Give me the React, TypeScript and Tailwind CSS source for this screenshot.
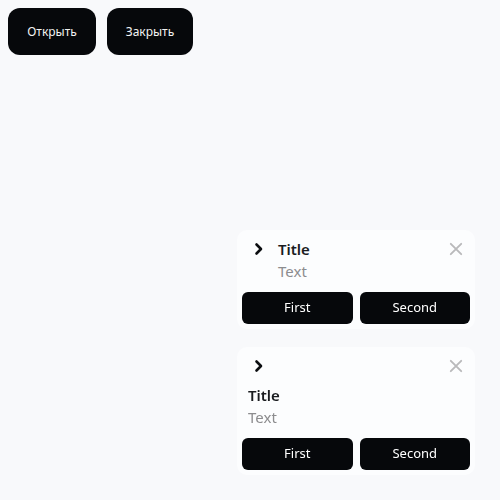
import type { ReactNode } from "react";

// toast-like notification cards, stacked in the bottom right corner

function Chevron() {
  return (
    <svg width="24" height="24" viewBox="0 0 24 24" fill="none" className="text-[#0b0d10]">
      <path d="M9.5 7.5 14 12l-4.5 4.5" stroke="currentColor" strokeWidth="2.6" strokeLinecap="round" strokeLinejoin="round" />
    </svg>
  );
}

function Close() {
  return (
    <svg width="24" height="24" viewBox="0 0 24 24" fill="none" className="text-[#b9b9bb]">
      <path d="M6.8 6.8l10.4 10.4M17.2 6.8 6.8 17.2" stroke="currentColor" strokeWidth="1.9" strokeLinecap="round" />
    </svg>
  );
}

function Actions() {
  return (
    <div className="grid grid-cols-2 gap-[7px]">
      <button className="h-8 rounded-[6px] bg-[#06080b] text-[13px] text-white">First</button>
      <button className="h-8 rounded-[6px] bg-[#06080b] text-[13px] text-white">Second</button>
    </div>
  );
}

function Card({ children }: { children: ReactNode }) {
  return (
    <div className="w-[238px] rounded-[10px] bg-[#fcfdfe] p-[5px]">{children}</div>
  );
}

export default function App() {
  return (
    <div className="relative min-h-screen bg-[#f8f9fb] font-['Noto_Sans',sans-serif]">
      <div className="flex gap-[11px] p-2">
        <button className="h-[47px] w-[88px] rounded-[12px] bg-[#06080b] text-[12px] text-[#f2f2f2]">
          Открыть
        </button>
        <button className="h-[47px] w-[86px] rounded-[12px] bg-[#06080b] text-[12px] text-[#f2f2f2]">
          Закрыть
        </button>
      </div>

      <div className="fixed bottom-[25px] right-[25px] flex flex-col gap-[18px]">
        <Card>
          <div className="flex items-start pl-[5px] pr-[2px] pt-[2px]">
            <Chevron />
            <div className="ml-[7px] flex-1">
              <div className="text-[15px] font-semibold leading-[22px] text-[#1a1c1f] mt-[1px]">Title</div>
              <div className="text-[15px] leading-[22px] text-[#8c8c8e]">Text</div>
            </div>
            <Close />
          </div>
          <div className="mt-[10px]">
            <Actions />
          </div>
        </Card>

        <Card>
          <div className="flex items-center justify-between pl-[5px] pr-[2px] pt-[2px]">
            <Chevron />
            <Close />
          </div>
          <div className="px-[6px] pt-[6px]">
            <div className="text-[15px] font-semibold leading-[22px] text-[#1a1c1f]">Title</div>
            <div className="text-[15px] leading-[22px] text-[#8c8c8e]">Text</div>
          </div>
          <div className="mt-[10px]">
            <Actions />
          </div>
        </Card>
      </div>
    </div>
  );
}
